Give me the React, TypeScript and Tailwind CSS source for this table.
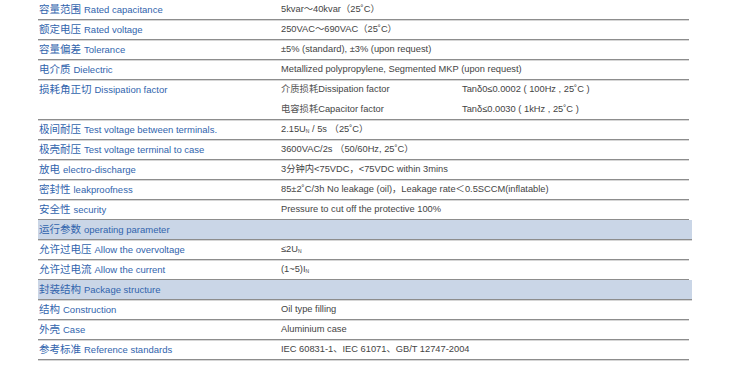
import React from "react";

type Row =
  | { kind: "row"; zh: string; en: string; value: React.ReactNode }
  | { kind: "band"; zh: string; en: string }
  | { kind: "double"; zh: string; en: string };

const Sub = ({ c }: { c: string }) => (
  <span className="text-[5px] align-[-1px]">{c}</span>
);

const rows: Row[] = [
  { kind: "row", zh: "容量范围", en: "Rated capacitance", value: "5kvar～40kvar（25˚C）" },
  { kind: "row", zh: "额定电压", en: "Rated voltage", value: "250VAC～690VAC（25˚C）" },
  { kind: "row", zh: "容量偏差", en: "Tolerance", value: "±5% (standard), ±3% (upon request)" },
  { kind: "row", zh: "电介质", en: "Dielectric", value: "Metallized polypropylene, Segmented MKP (upon request)" },
  { kind: "double", zh: "损耗角正切", en: "Dissipation factor" },
  {
    kind: "row",
    zh: "极间耐压",
    en: "Test voltage between terminals.",
    value: (
      <>
        2.15U<Sub c="N" /> / 5s （25˚C）
      </>
    ),
  },
  { kind: "row", zh: "极壳耐压", en: "Test voltage terminal to case", value: "3600VAC/2s （50/60Hz, 25˚C）" },
  { kind: "row", zh: "放电", en: "electro-discharge", value: "3分钟内<75VDC，<75VDC within 3mins" },
  { kind: "row", zh: "密封性", en: "leakproofness", value: "85±2˚C/3h No leakage (oil)，Leakage rate＜0.5SCCM(inflatable)" },
  { kind: "row", zh: "安全性", en: "security", value: "Pressure to cut off the protective 100%" },
  { kind: "band", zh: "运行参数", en: "operating parameter" },
  {
    kind: "row",
    zh: "允许过电压",
    en: "Allow the overvoltage",
    value: (
      <>
        ≤2U<Sub c="N" />
      </>
    ),
  },
  {
    kind: "row",
    zh: "允许过电流",
    en: "Allow the current",
    value: (
      <>
        (1~5)I<Sub c="N" />
      </>
    ),
  },
  { kind: "band", zh: "封装结构", en: "Package structure" },
  { kind: "row", zh: "结构", en: "Construction", value: "Oil type filling" },
  { kind: "row", zh: "外壳", en: "Case", value: "Aluminium case" },
  { kind: "row", zh: "参考标准", en: "Reference standards", value: "IEC 60831-1、IEC 61071、GB/T 12747-2004" },
];

function Label({ zh, en }: { zh: string; en: string }) {
  return (
    <div className="pl-px flex items-center gap-[3px] text-[#3164ad] whitespace-nowrap leading-none">
      <span className="text-[10.5px]">{zh}</span>
      <span className="text-[9.5px]">{en}</span>
    </div>
  );
}

export default function App() {
  return (
    <div
      className="w-[734px] h-[379px] bg-white overflow-hidden"
      style={{ fontFamily: '"Liberation Sans", Arial, "Noto Sans CJK SC", sans-serif' }}
    >
      <div className="ml-[38px] w-[651px] -mt-px border-t border-[#9aa3b0]">
        {rows.map((r, i) => {
          if (r.kind === "band") {
            return (
              <div
                key={i}
                className="h-5 -mr-[3px] flex items-center bg-[#cad6e7] border-b border-[#8d8d8d] shadow-[0_1px_0_#d6d6d6]"
              >
                <Label zh={r.zh} en={r.en} />
              </div>
            );
          }
          if (r.kind === "double") {
            return (
              <div
                key={i}
                className="h-10 grid grid-cols-[238px_1fr] border-b border-[#8d8d8d] shadow-[0_1px_0_#d6d6d6]"
              >
                <div className="pt-[4px]">
                  <Label zh={r.zh} en={r.en} />
                </div>
                <div className="pl-[5px] text-[9.3px] leading-none text-[#444] grid grid-cols-[181px_1fr] grid-rows-2 items-center">
                  <div>
                    <span className="text-[#555]">介质损耗</span>Dissipation factor
                  </div>
                  <div>Tanδ0≤0.0002 ( 100Hz , 25˚C )</div>
                  <div>
                    <span className="text-[#555]">电容损耗</span>Capacitor factor
                  </div>
                  <div>Tanδ≤0.0030 ( 1kHz , 25˚C )</div>
                </div>
              </div>
            );
          }
          return (
            <div
              key={i}
              className="h-5 grid grid-cols-[238px_1fr] items-center border-b border-[#8d8d8d] shadow-[0_1px_0_#d6d6d6]"
            >
              <Label zh={r.zh} en={r.en} />
              <div className="pl-[5px] text-[9.3px] leading-none text-[#444] whitespace-nowrap">{r.value}</div>
            </div>
          );
        })}
      </div>
    </div>
  );
}
